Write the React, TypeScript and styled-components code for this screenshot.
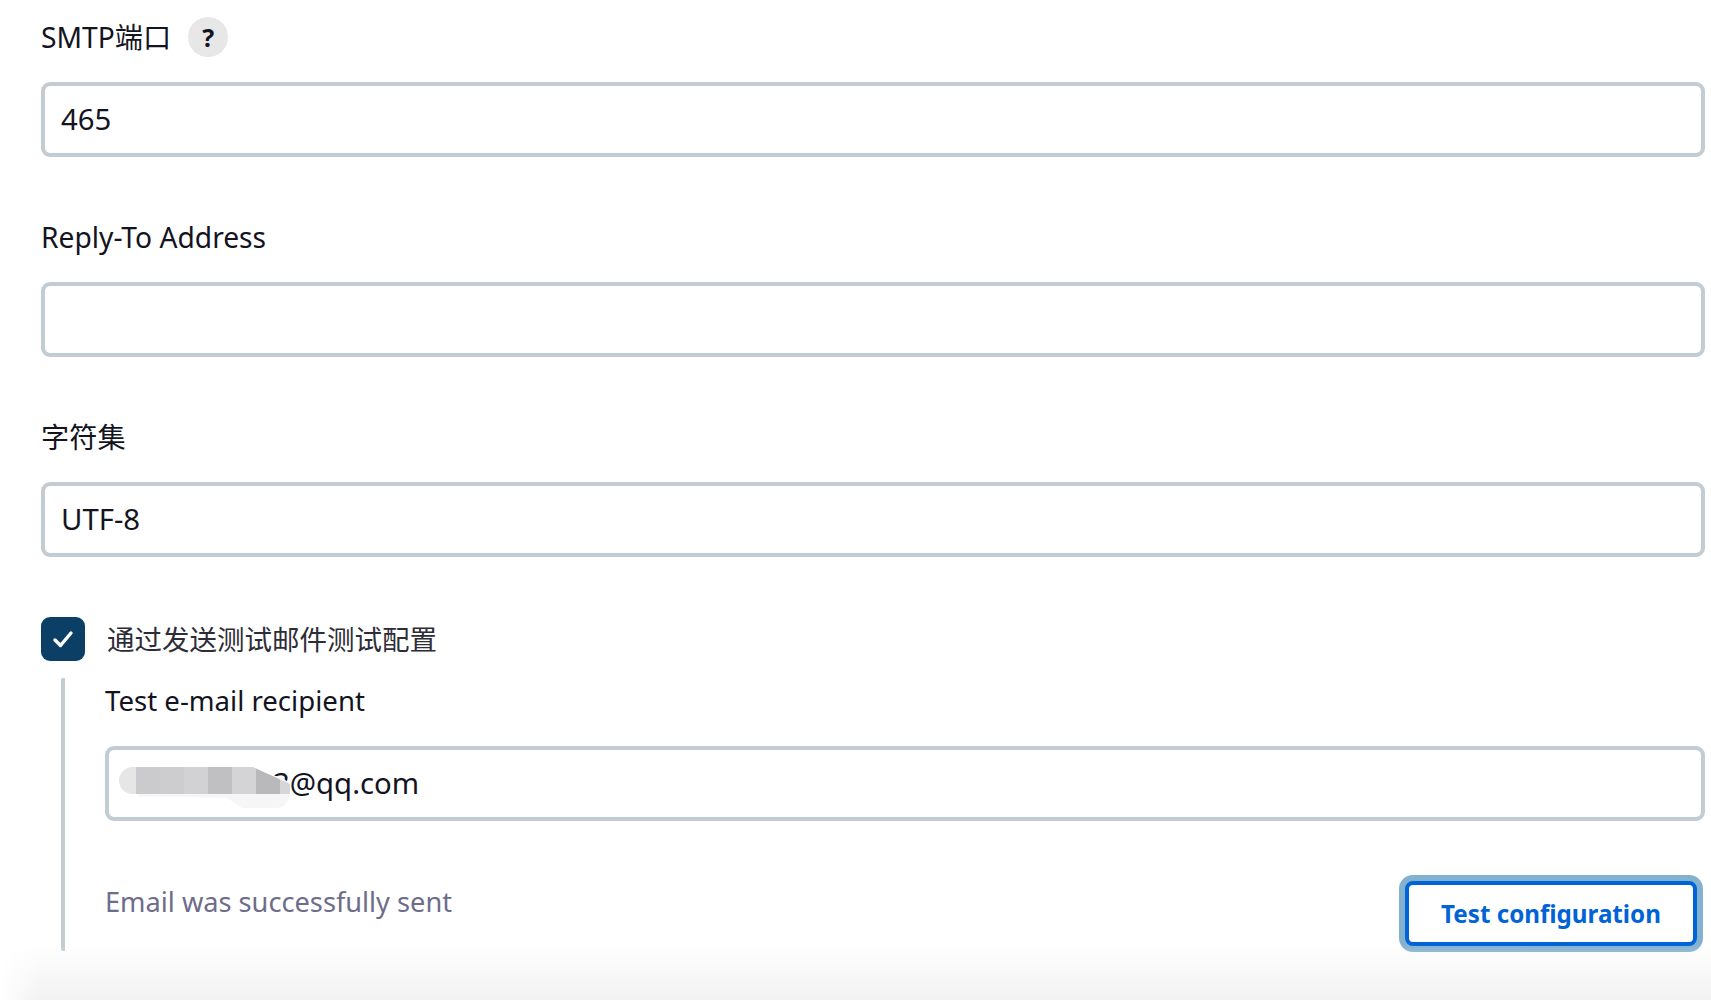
import React from "react";
import styled, { createGlobalStyle } from "styled-components";

const GlobalStyle = createGlobalStyle`
  html, body {
    margin: 0;
    background: #fff;
  }
  body {
    font-family: "Noto Sans", "Noto Sans CJK SC", sans-serif;
    color: #14141f;
  }
`;

const Field: React.FC<{ label: string; value?: string; help?: boolean }> = ({ label, value, help }) => (
  <FieldBox>
    <LabelRow>
      <FieldLabel>{label}</FieldLabel>
      {help && <HelpBadge>?</HelpBadge>}
    </LabelRow>
    <InputBox>{value}</InputBox>
  </FieldBox>
);

const App: React.FC = () => {
  return (
    <Page>
      <GlobalStyle />
      <Field label="SMTP端口" value="465" help />
      <Field label="Reply-To Address" />
      <Field label="字符集" value="UTF-8" />
      <CheckRow>
        <CheckBox>
          <svg width="22" height="22" viewBox="0 0 22 22" fill="none">
            <path d="M3 12 L8.5 17.5 L19 5" stroke="#fff" strokeWidth="3.4" strokeLinecap="round" strokeLinejoin="round" />
          </svg>
        </CheckBox>
        <CheckLabel>通过发送测试邮件测试配置</CheckLabel>
      </CheckRow>
      <Nested>
        <RecipientLabel>Test e-mail recipient</RecipientLabel>
        <RecipientInput>
          <RecipientText>3@qq.com</RecipientText>
          <SmudgeTail />
          <Smudge>
            <Pixel $shade="#e6e6e7" $w={17} />
            <Pixel $shade="#cbcbcd" $w={24} />
            <Pixel $shade="#cdcdcf" $w={24} />
            <Pixel $shade="#d2d2d4" $w={24} />
            <Pixel $shade="#c0c0c2" $w={24} />
            <Pixel $shade="#d4d4d6" $w={24} />
            <Pixel $shade="#b9b9bb" $w={24} />
            <Pixel $shade="#d6d6d8" $w={10} />
          </Smudge>
        </RecipientInput>
        <ActionRow>
          <Status>Email was successfully sent</Status>
          <TestButton>Test configuration</TestButton>
        </ActionRow>
      </Nested>
      <BottomFade />
    </Page>
  );
};

const Page = styled.div`
  position: relative;
  box-sizing: border-box;
  height: 1000px;
  padding: 15px 6px 0 41px;
  overflow: hidden;
`;
const FieldBox = styled.div`
  margin-bottom: 58px;
`;
const LabelRow = styled.div`
  display: flex;
  align-items: center;
  gap: 17px;
  height: 44px;
  margin-bottom: 23px;
`;
const Label = styled.div`
  font-size: 27.6px;
  line-height: 44px;
`;
const FieldLabel = styled(Label)`
  font-size: 28.2px;
  line-height: 42px;
  margin-top: -1px;
`;
const RecipientLabel = styled(Label)`
  margin-top: -3px;
`;
const HelpBadge = styled.div`
  display: flex;
  align-items: center;
  justify-content: center;
  width: 40px;
  height: 40px;
  border-radius: 50%;
  background: #e7e7e8;
  font-size: 25px;
  font-weight: 700;
`;
const InputBox = styled.div`
  box-sizing: border-box;
  height: 75px;
  padding: 0 16px;
  border: 4px solid #c3ccd2;
  border-radius: 9px;
  font-size: 29.3px;
  line-height: 67px;
`;
const CheckRow = styled.div`
  display: flex;
  align-items: center;
  gap: 22px;
  margin-top: 60px;
`;
const CheckBox = styled.div`
  display: flex;
  align-items: center;
  justify-content: center;
  width: 44px;
  height: 44px;
  border-radius: 9px;
  background: #0b3f66;
`;
const CheckLabel = styled.div`
  margin-top: -2px;
  font-size: 27.5px;
  color: #2d2d38;
`;
const Nested = styled.div`
  margin: 20px 0 0 20px;
  padding-left: 40px;
  border-left: 4px solid #c3ccd2;
  height: 273px;
  border-radius: 2px;
  box-sizing: border-box;
`;
const RecipientInput = styled(InputBox)`
  position: relative;
  margin-top: 24px;
`;
const Smudge = styled.div`
  position: absolute;
  left: 10px;
  top: 17px;
  display: flex;
  height: 27px;
  border-radius: 14px 0 0 14px;
  overflow: hidden;
  clip-path: polygon(0 0, 134px 0, 171px 17px, 171px 27px, 0 27px);
`;
const SmudgeTail = styled.div`
  position: absolute;
  left: 24px;
  top: 26px;
  width: 156px;
  height: 32px;
  border-radius: 4px 18px 18px 40px;
  background: #f6f6f6;
  clip-path: polygon(0 0, 100% 0, 100% 100%, 70% 100%, 60% 68%, 0 64%);
`;
const Pixel = styled.div<{ $shade: string; $w: number }>`
  width: ${(p) => p.$w}px;
  flex: none;
  background: ${(p) => p.$shade};
`;
const RecipientText = styled.span`
  margin-left: 148px;
`;
const ActionRow = styled.div`
  display: flex;
  justify-content: space-between;
  align-items: flex-start;
  margin-top: 63px;
`;
const Status = styled.div`
  font-size: 27.2px;
  line-height: 44px;
  margin-top: -4px;
  color: #6d6d8a;
`;
const TestButton = styled.button`
  box-sizing: border-box;
  width: 292px;
  height: 65px;
  margin: -3px 8px 0 0;
  background: #fff;
  border: 4px solid #0063d6;
  border-radius: 8px;
  box-shadow: 0 0 0 6px #83b2d0;
  color: #0063d6;
  font-family: inherit;
  font-size: 24.2px;
  font-weight: 700;
`;
const BottomFade = styled.div`
  position: absolute;
  left: 0;
  right: 0;
  bottom: 0;
  height: 56px;
  background: linear-gradient(to bottom, rgba(242, 242, 242, 0), #f2f2f2);
  mask-image: linear-gradient(to right, transparent, #000 40px);
  pointer-events: none;
`;

export default App;
